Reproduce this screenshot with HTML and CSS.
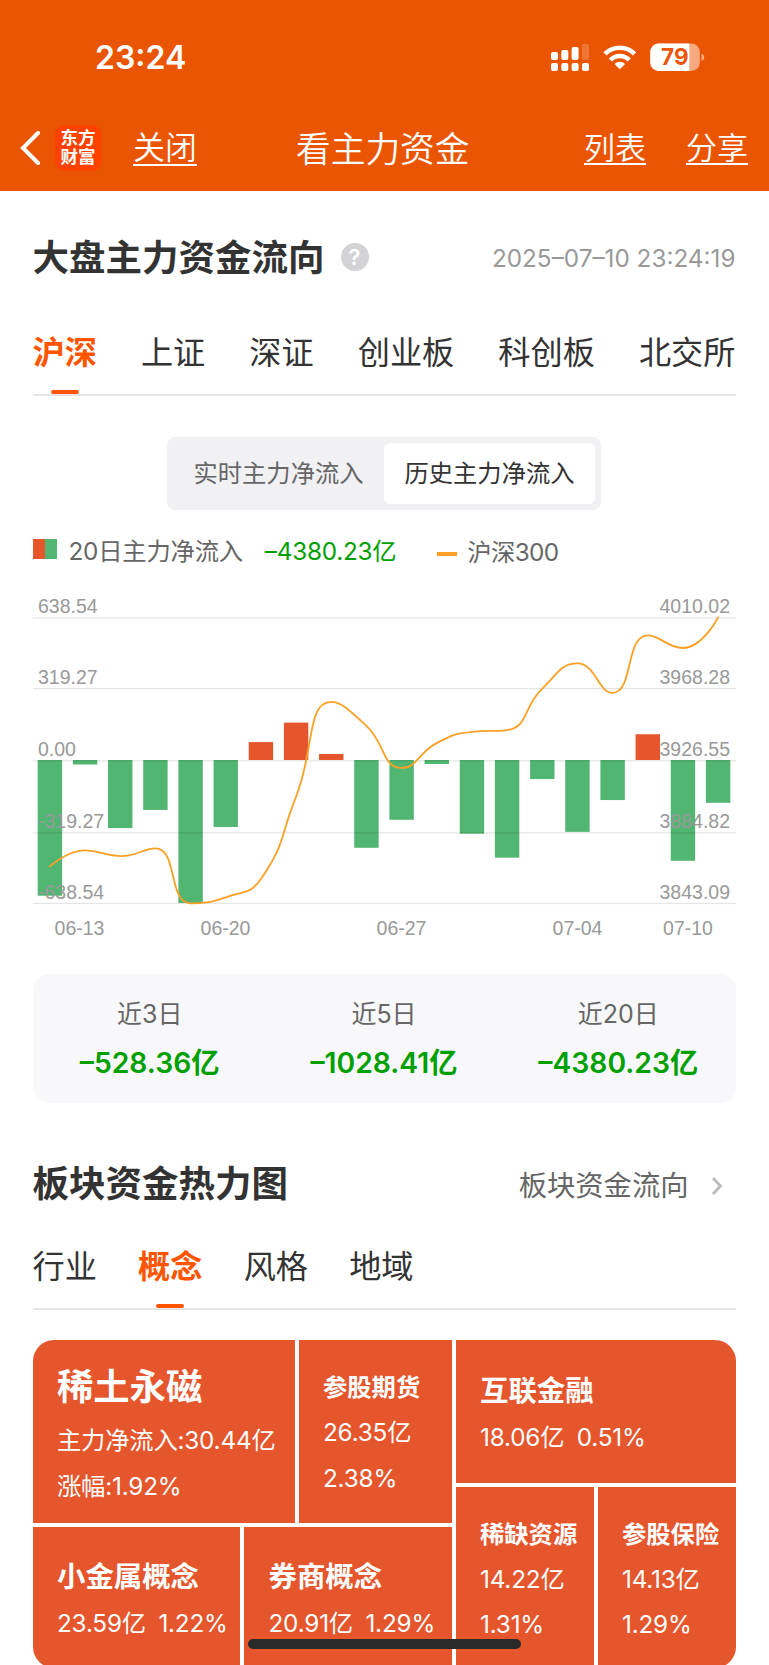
FILE: index.html
```html
<!DOCTYPE html>
<html lang="zh-CN">
<head>
    <meta charset="UTF-8">
    <meta name="viewport" content="width=device-width, initial-scale=1.0">
    <title>看主力资金</title>
    <link rel="stylesheet" href="styles.css">
</head>
<body>
    <header>
        <div class="status">
            <span class="time">23:24</span>
            <svg class="status-icons" width="154" height="30" viewBox="0 0 154 30">
                <g fill="#fff">
                    <rect x="0" y="9" width="7" height="8" rx="2"/>
                    <rect x="10.3" y="7" width="7" height="10" rx="2"/>
                    <rect x="20.6" y="4" width="7" height="13" rx="2"/>
                    <rect x="31" y="1" width="7" height="16" rx="2" opacity=".2"/>
                    <rect x="0" y="20" width="7" height="8" rx="2"/>
                    <rect x="10.3" y="20" width="7" height="8" rx="2"/>
                    <rect x="20.6" y="20" width="7" height="8" rx="2"/>
                    <rect x="31" y="20" width="7" height="8" rx="2"/>
                </g>
                <g fill="none" stroke="#fff" stroke-width="4.6">
                    <path d="M54 10.8a21.3 21.3 0 0 1 29.6 0"/>
                    <path d="M59.4 17a13 13 0 0 1 18.8 0"/>
                </g>
                <path d="M68.8 26.3L63.5 21a7.3 7.3 0 0 1 10.6 0z" fill="#fff"/>
                <rect x="99.3" y="0.5" width="49.5" height="27.5" rx="8.5" fill="#f6aa82"/>
                <path d="M138.3 0.5h-30.5a8.5 8.5 0 0 0-8.5 8.5v10.5a8.5 8.5 0 0 0 8.5 8.5H138.3z" fill="#fff"/>
                <path d="M150.5 10.5q2.7 1 2.7 3.8t-2.7 3.8z" fill="#f6aa82"/>
                <text class="battery" x="123.8" y="22.3" text-anchor="middle">79</text>
            </svg>
        </div>
        <nav class="nav">
            <svg class="back" width="20" height="34" viewBox="0 0 20 34">
                <path d="M18 2L3 17l15 15" fill="none" stroke="#fff" stroke-width="4" stroke-linecap="round"/>
            </svg>
            <div class="logo">东方<br>财富</div>
            <a class="close">关闭</a>
            <h1>看主力资金</h1>
            <a class="list">列表</a>
            <a class="share">分享</a>
        </nav>
    </header>

    <main>
        <div class="section-head">
            <h2>大盘主力资金流向</h2>
            <span class="help">?</span>
            <span class="date">2025–07–10 23:24:19</span>
        </div>
        <div class="tabs tabs-market">
            <span class="tab active">沪深</span>
            <span class="tab">上证</span>
            <span class="tab">深证</span>
            <span class="tab">创业板</span>
            <span class="tab">科创板</span>
            <span class="tab">北交所</span>
        </div>

        <div class="switch">
            <span>实时主力净流入</span>
            <span class="on">历史主力净流入</span>
        </div>
        <div class="legend">
            <i class="swatch"></i>
            <span class="legend-name">20日主力净流入</span>
            <span class="legend-value">–4380.23亿</span>
            <i class="dash"></i>
            <span class="legend-index">沪深300</span>
        </div>
        <svg id="chart" width="703" height="351" viewBox="0 -6 703 351"></svg>

        <div class="summary">
            <div><span>近3日</span><b>–528.36亿</b></div>
            <div><span>近5日</span><b>–1028.41亿</b></div>
            <div><span>近20日</span><b>–4380.23亿</b></div>
        </div>

        <div class="section-head heat-head">
            <h2>板块资金热力图</h2>
            <a class="more">板块资金流向</a>
            <svg width="12" height="20" viewBox="0 0 12 20">
                <path d="M2 2l7.5 8L2 18" fill="none" stroke="#bbb" stroke-width="2.8"/>
            </svg>
        </div>
        <div class="tabs tabs-heat">
            <span class="tab">行业</span>
            <span class="tab active">概念</span>
            <span class="tab">风格</span>
            <span class="tab">地域</span>
        </div>

        <div class="heatmap">
            <div class="heat-left">
                <div class="heat-row row-top">
                    <div class="tile t1"><h3>稀土永磁</h3><p>主力净流入:30.44亿</p><p>涨幅:1.92%</p></div>
                    <div class="tile small"><h3>参股期货</h3><p>26.35亿</p><p>2.38%</p></div>
                </div>
                <div class="heat-row">
                    <div class="tile mid"><h3>小金属概念</h3><p>23.59亿<em>1.22%</em></p></div>
                    <div class="tile mid"><h3>券商概念</h3><p>20.91亿<em>1.29%</em></p></div>
                </div>
            </div>
            <div class="heat-right">
                <div class="tile mid t3"><h3>互联金融</h3><p>18.06亿<em>0.51%</em></p></div>
                <div class="heat-row">
                    <div class="tile small"><h3>稀缺资源</h3><p>14.22亿</p><p>1.31%</p></div>
                    <div class="tile small"><h3>参股保险</h3><p>14.13亿</p><p>1.29%</p></div>
                </div>
            </div>
        </div>
    </main>
    <div class="home-bar"></div>

    <script>
        const flows = [-606, -20, -304, -223, -638.54, -299, 80, 167, 27, -392,
            -267, -18, -329, -436, -85, -321, -179, 115, -450, -191];
        const hs300 = [3864.6, 3874, 3870.6, 3875.2, 3843.09, 3846.6, 3857.3, 3905.4, 3960.6, 3946.6,
            3922.1, 3936.6, 3943.2, 3944.2, 3968.4, 3983.1, 3965.9, 3999.5, 3992.1, 4010.02];
        const leftLabels = ["638.54", "319.27", "0.00", "-319.27", "-638.54"];
        const rightLabels = ["4010.02", "3968.28", "3926.55", "3884.82", "3843.09"];
        const gridY = [18, 88.5, 160.7, 232.7, 303.3];
        const days = [["06-13", 46.5], ["06-20", 192.5], ["06-27", 368.5], ["07-04", 544.5], ["07-10", 655]];

        const zero = 160;
        const step = 35.17;
        const centerX = i => 16.9 + step * i;

        const clamp = (v, a, b) => Math.max(Math.min(a, b), Math.min(Math.max(a, b), v));

        // smooth curve that never overshoots its neighbours
        const smoothPath = (pts) => {
            let d = `M${pts[0][0]} ${pts[0][1]}`;
            let out = pts[0];
            for (let i = 1; i < pts.length; i++) {
                const prev = pts[i - 1], cur = pts[i], next = pts[i + 1];
                let c1 = cur, nextOut = cur;
                if (next) {
                    const lp = Math.hypot(cur[0] - prev[0], cur[1] - prev[1]);
                    const ln = Math.hypot(next[0] - cur[0], next[1] - cur[1]);
                    const r = ln / (ln + lp);
                    nextOut = [0, 1].map(k => clamp(cur[k] + (next[k] - prev[k]) * 0.5 * r, cur[k], next[k]));
                    c1 = [0, 1].map(k => clamp(cur[k] - (nextOut[k] - cur[k]) * lp / ln, prev[k], cur[k]));
                    nextOut = [0, 1].map(k => cur[k] + (cur[k] - c1[k]) * ln / lp);
                }
                d += `C${out[0]} ${out[1]} ${c1[0]} ${c1[1]} ${cur[0]} ${cur[1]}`;
                out = nextOut;
            }
            return d;
        };

        let svg = "";
        flows.forEach((v, i) => {
            const h = Math.abs(v) / 638.54 * 143;
            svg += `<rect class="${v > 0 ? "up" : "down"}" x="${centerX(i) - 12.2}" y="${v > 0 ? zero - h : zero}" width="24.4" height="${h}"/>`;
        });
        gridY.forEach((y, i) => {
            svg += `<rect class="grid" x="0" y="${y - 0.5}" width="703" height="1.3"/>`;
            svg += `<text x="5" y="${12.8 + i * 71.6}">${leftLabels[i]}</text>`;
            svg += `<text x="697" y="${12.8 + i * 71.6}" text-anchor="end">${rightLabels[i]}</text>`;
        });
        const pts = hs300.map((v, i) => [centerX(i), 303.3 - (v - 3843.09) / 166.93 * 286]);
        svg += `<path class="line" d="${smoothPath(pts)}"/>`;
        days.forEach(([t, x]) => {
            svg += `<text x="${x}" y="334.7" text-anchor="middle">${t}</text>`;
        });
        document.querySelector("#chart").innerHTML = svg;
    </script>
</body>
</html>
```
FILE: styles.css
```css
*{
    margin: 0;
    padding: 0;
    box-sizing: border-box;
}
body{
    height: 1665px;
    overflow: hidden;
    background-color: #fff;
    color: #333;
    font-family: Inter, "Noto Sans CJK SC", sans-serif;
    font-size: 24.3px;
    white-space: nowrap;
}
header{
    height: 191px;
    background-color: #ea5504;
    color: #fff;
}
.status{
    height: 107px;
    padding: 42px 64px 0 95px;
    display: flex;
    justify-content: space-between;
}
.time{
    font-size: 32px;
    line-height: 32px;
    font-weight: 600;
}
.status-icons{
    margin-top: 1px;
}
.battery{
    font-size: 22.5px;
    font-weight: 700;
    fill: #ea5504;
}
.nav{
    height: 83px;
    padding-left: 20px;
    display: flex;
    align-items: center;
    font-weight: 350;
}
.logo{
    width: 46px;
    height: 46px;
    margin: -2px 32px 0 15px;
    padding-top: 3px;
    border-radius: 9px;
    background-color: #ff4200;
    font-size: 17.5px;
    line-height: 19.5px;
    font-weight: 700;
    text-align: center;
}
.nav a{
    margin-bottom: 2px;
    font-size: 31px;
    line-height: 31px;
    padding-top: 2px;
    border-bottom: 2px solid #fff;
}
.nav .close{
    margin-bottom: 0;
    padding-top: 0;
    font-size: 32px;
    line-height: 33px;
}
.back{
    margin-top: -1px;
}
h1{
    width: 175px;
    margin-left: 99px;
    font-size: 34.7px;
    line-height: 36px;
    font-weight: 350;
}
.nav .list{
    margin-left: 113px;
}
.nav .share{
    margin-left: 40px;
}
main{
    padding: 37px 33.5px 0 32.5px;
}
.section-head{
    height: 60px;
    display: flex;
    align-items: center;
}
h2{
    font-size: 36.5px;
    line-height: 40px;
    font-weight: 600;
}
.help{
    width: 28px;
    height: 28px;
    margin: -3px 0 0 16px;
    border-radius: 50%;
    background-color: #d3d3d6;
    color: #fff;
    font-size: 22px;
    line-height: 28px;
    font-weight: 600;
    text-align: center;
}
.date{
    margin-left: auto;
    color: #999;
}
.tabs{
    display: flex;
    border-bottom: 2px solid #e6e6e6;
    font-size: 32.2px;
}
.tabs-market{
    height: 108px;
    justify-content: space-between;
    padding-top: 44px;
}
.tab{
    line-height: 42px;
}
.active{
    position: relative;
    color: #ff5500;
    font-weight: 600;
}
.active::after{
    content: "";
    position: absolute;
    left: 50%;
    bottom: 0;
    width: 28px;
    height: 4px;
    margin-left: -14px;
    border-radius: 2px;
    background-color: #ff5500;
}
.switch{
    width: 434px;
    height: 73px;
    margin: 41px auto 0;
    padding: 6px;
    display: flex;
    border-radius: 8px;
    background-color: #f1f1f4;
    color: #666;
}
.switch span{
    flex: 1;
    border-radius: 6px;
    line-height: 61px;
    text-align: center;
}
.switch .on{
    background-color: #fff;
    color: #333;
}
.legend{
    height: 60px;
    margin-top: 9px;
    display: flex;
    align-items: center;
    color: #666;
    letter-spacing: -0.2px;
}
.swatch{
    width: 24px;
    height: 20px;
    margin: 0 12px 0 0;
    background: linear-gradient(90deg, #e5562d 50%, #51b671 50%);
}
.legend-value{
    margin-left: 22px;
    color: #00a000;
    letter-spacing: -0.25px;
}
.dash{
    width: 20px;
    height: 4px;
    margin: 10px 10px 0 41px;
    background-color: #fba026;
}
.legend-index{
    margin-top: 3px;
    letter-spacing: -0.6px;
}
#chart{
    display: block;
    margin-top: 15px;
    font-family: "Liberation Sans", sans-serif;
    font-size: 19.5px;
    fill: #999;
}
.up{
    fill: #e5562d;
}
.down{
    fill: #51b671;
}
.grid{
    fill: rgba(0,0,0,0.1);
}
.line{
    fill: none;
    stroke: #fba026;
    stroke-width: 1.8;
    stroke-linecap: round;
}
.summary{
    height: 129px;
    margin-top: 29px;
    padding-top: 22px;
    display: flex;
    border-radius: 16px;
    background-color: #f8f8fb;
    text-align: center;
}
.summary div{
    flex: 1;
}
.summary span, .summary b{
    display: block;
}
.summary span{
    font-size: 25px;
    line-height: 36px;
    color: #666;
}
.summary b{
    margin-top: 12px;
    font-size: 28.3px;
    line-height: 39px;
    font-weight: 600;
    color: #00a000;
}
.heat-head{
    margin-top: 51px;
}
.more{
    margin: -2px 0 0 auto;
    font-size: 28.3px;
    color: #666;
}
.heat-head svg{
    margin: 4px 13px 0 22px;
}
.tabs-heat{
    height: 96px;
    padding-top: 31px;
    gap: 41.2px;
}
.tabs-heat .tab{
    line-height: 43px;
}
.heatmap{
    height: 328px;
    margin-top: 30px;
    display: flex;
    gap: 4px;
    border-radius: 21px;
    overflow: hidden;
    color: #fff;
}
.heat-left{
    width: 419px;
}
.heat-left, .heat-right{
    display: flex;
    flex-direction: column;
    gap: 4px;
}
.heat-right, .heat-row{
    flex: 1;
}
.heat-row{
    display: flex;
    gap: 4px;
}
.row-top{
    flex: 0 0 182.5px;
}
.tile{
    flex: 1;
    padding: 20px 0 0 24.5px;
    background-color: #e5562d;
}
.tile p{
    line-height: 45.5px;
    letter-spacing: -0.2px;
}
.tile em{
    margin-left: 12.5px;
    font-style: normal;
}
.t1{
    flex: 0 0 262px;
}
.t1 h3{
    font-size: 36.3px;
    line-height: 54px;
    font-weight: 600;
    margin-bottom: 4px;
}
.small{
    padding-top: 24px;
}
.small h3{
    font-size: 24.3px;
    line-height: 46px;
    font-weight: 600;
}
.mid{
    padding-top: 28.5px;
}
.mid h3{
    font-size: 28.4px;
    line-height: 44px;
    font-weight: 600;
    margin-bottom: 2px;
}
.t3{
    flex: 0 0 142.5px;
}
.home-bar{
    position: absolute;
    left: 248px;
    top: 1639px;
    width: 273px;
    height: 10px;
    border-radius: 5px;
    background-color: #2a2a2a;
}
```
